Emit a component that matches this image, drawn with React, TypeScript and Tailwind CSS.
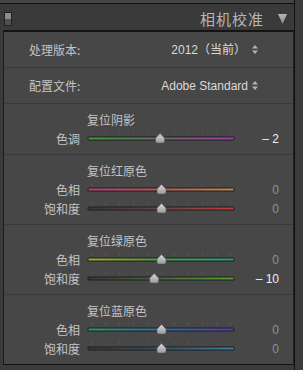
import React from "react";

type Row = { label: string; value: number; stops: string[] };
type Section = { title: string; rows: Row[] };

const sections: Section[] = [
  {
    title: "复位阴影",
    rows: [{ label: "色调", value: -2, stops: ["#3f9e3a", "#6c6c6c", "#a83cae"] }],
  },
  {
    title: "复位红原色",
    rows: [
      { label: "色相", value: 0, stops: ["#c03c7c", "#b85a58", "#c08c44"] },
      { label: "饱和度", value: 0, stops: ["#383838", "#6a4444", "#c43a3a"] },
    ],
  },
  {
    title: "复位绿原色",
    rows: [
      { label: "色相", value: 0, stops: ["#a4aa2c", "#4c9e3c", "#2a9a90"] },
      { label: "饱和度", value: -10, stops: ["#383838", "#4a6a3a", "#4ea22c"] },
    ],
  },
  {
    title: "复位蓝原色",
    rows: [
      { label: "色相", value: 0, stops: ["#2a9c70", "#2c6ea4", "#5a3cb4"] },
      { label: "饱和度", value: 0, stops: ["#383838", "#3a5262", "#3c80a8"] },
    ],
  },
];

const cjk = { fontFamily: '"Noto Sans CJK SC", "Noto Sans", sans-serif' };
const latin = { fontFamily: '"Liberation Sans", Arial, sans-serif' };

function UpDown() {
  return (
    <svg width="6" height="9" viewBox="0 0 6 9" className="shrink-0">
      <path d="M3 0 L6 3.5 L0 3.5 Z" fill="#b4b4b4" />
      <path d="M3 9 L6 5.5 L0 5.5 Z" fill="#b4b4b4" />
    </svg>
  );
}

function Slider({ id, value, stops }: { id: string; value: number; stops: string[] }) {
  const x0 = 2;
  const w = 146;
  const cx = x0 + (w / 2) * (1 + value / 100) + 0.5;
  const ticks = Array.from({ length: 11 }, (_, i) => x0 + 4 + (i * (w - 8)) / 10);
  return (
    <svg width="152" height="19" viewBox="0 0 152 19" className="shrink-0">
      <defs>
        <linearGradient id={id} x1="0" x2="1" y1="0" y2="0">
          <stop offset="0" stopColor={stops[0]} />
          <stop offset="0.5" stopColor={stops[1]} />
          <stop offset="1" stopColor={stops[2]} />
        </linearGradient>
        <linearGradient id={id + "t"} x1="0" x2="0" y1="0" y2="1">
          <stop offset="0" stopColor="#d8d8d8" />
          <stop offset="1" stopColor="#9a9a9a" />
        </linearGradient>
      </defs>
      {ticks.map((t, i) => (
        <line key={i} x1={t} x2={t} y1="2.5" y2="6" stroke="#545454" strokeWidth="1" />
      ))}
      <rect x={x0 - 0.5} y="7.5" width={w + 1} height="4" rx="1.5" fill="#1e1e1e" />
      <rect x={x0 + 0.5} y="8.5" width={w - 1} height="2" fill={`url(#${id})`} />
      <path
        d={`M${cx} 4.5 L${cx + 4.5} 9 L${cx + 4.5} 12 Q${cx + 4.5} 14 ${cx + 2.5} 14 L${cx - 2.5} 14 Q${cx - 4.5} 14 ${cx - 4.5} 12 L${cx - 4.5} 9 Z`}
        fill={`url(#${id}t)`}
        stroke="#5a5a5a"
        strokeWidth="0.6"
      />
    </svg>
  );
}

export default function App() {
  return (
    <div className="w-[303px] h-[370px] bg-[#3b3b3b] overflow-hidden flex">
      <div className="w-[295px] h-full flex flex-col border-r border-[#111]">
        {/* top strip */}
        <div className="h-[4px] bg-[#454545] border-b border-[#111]" />

        {/* header */}
        <div className="h-[26px] bg-[#3a3a3a] flex items-center pl-[4px] pr-[4px]">
          <div className="w-[8px] h-[14px] flex flex-col border border-[#222] mt-[3px]">
            <div className="flex-1 bg-[#8c8c8c]" />
            <div className="flex-1 bg-[#505050]" />
          </div>
          <div className="flex-1" />
          <span className="text-[15px] leading-none tracking-[1px] text-[#b6b6b6] mt-[3px]" style={cjk}>
            相机校准
          </span>
          <svg width="9" height="10" viewBox="0 0 9 10" className="ml-[14px] mr-[3px] mt-[3px]">
            <defs>
              <linearGradient id="hdrTri" x1="0" x2="0" y1="0" y2="1">
                <stop offset="0" stopColor="#b8b8b8" />
                <stop offset="1" stopColor="#8a8a8a" />
              </linearGradient>
            </defs>
            <path d="M0 0 L9 0 L4.5 10 Z" fill="url(#hdrTri)" />
          </svg>
        </div>

        {/* panel */}
        <div className="ml-[3px] w-[291px] bg-[#474747] border-t-2 border-l border-r border-b border-t-[#141414] border-l-[#1a1a1a] border-r-[#222] border-b-[#141414] flex flex-col">
          <div className="h-[35px] flex items-center justify-between pl-[25px] pr-[35px]">
            <span className="text-[12px] text-[#c4c4c4]" style={cjk}>
              处理版本:
            </span>
            <div className="flex items-center gap-[6px]">
              <span className="text-[12px] text-[#dadada]" style={cjk}>
                <span style={latin}>2012</span>（当前）
              </span>
              <UpDown />
            </div>
          </div>
          <div className="h-px bg-[#3a3a3a]" />
          <div className="h-[35px] flex items-center justify-between pl-[25px] pr-[35px]">
            <span className="text-[12px] text-[#c4c4c4]" style={cjk}>
              配置文件:
            </span>
            <div className="flex items-center gap-[4px]">
              <span className="text-[12px] text-[#dadada]" style={latin}>
                Adobe Standard
              </span>
              <UpDown />
            </div>
          </div>
          {sections.map((s, si) => (
            <div key={s.title}>
              <div className="h-px bg-[#3a3a3a]" />
              <div className="pt-[6px] pb-[6px] flex flex-col">
                <div className="h-[19px] flex items-center pl-[83px]">
                  <span className="text-[12px] text-[#c4c4c4]" style={cjk}>
                    {s.title}
                  </span>
                </div>
                {s.rows.map((r, ri) => (
                  <div key={r.label} className="h-[19px] flex items-center">
                    <span className="w-[76px] text-right text-[12px] text-[#c4c4c4]" style={cjk}>
                      {r.label}
                    </span>
                    <div className="ml-[6px]">
                      <Slider id={`g${si}${ri}`} value={r.value} stops={r.stops} />
                    </div>
                    <span
                      className={`w-[41px] text-right text-[12px] ${r.value === 0 ? "text-[#8c929a]" : "text-[#f0f0f0]"}`}
                      style={latin}
                    >
                      {r.value === 0 ? "0" : `– ${Math.abs(r.value)}`}
                    </span>
                  </div>
                ))}
              </div>
            </div>
          ))}
        </div>
      </div>
    </div>
  );
}
